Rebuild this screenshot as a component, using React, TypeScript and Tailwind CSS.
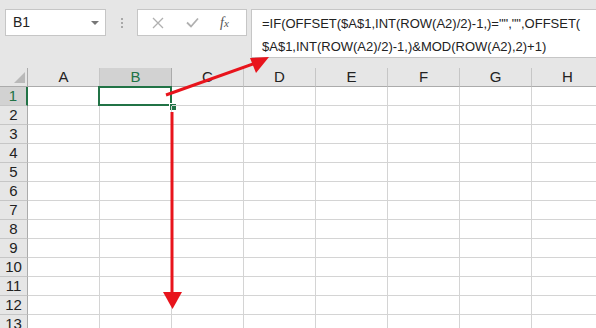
import React from "react";

const cols = ["A", "B", "C", "D", "E", "F", "G", "H"];
const rows = Array.from({ length: 13 }, (_, i) => i + 1);

export default function App() {
  return (
    <div
      className="relative w-[596px] h-[328px] overflow-hidden bg-white"
      style={{ fontFamily: '"Liberation Sans", Arial, sans-serif' }}
    >
      {/* toolbar */}
      <div className="h-[68px] bg-[#e6e6e6] flex items-start pt-[9px]">
        <div className="shrink-0 ml-[5px] w-[101px] h-[27px] bg-white border border-[#c6c6c6] flex items-center justify-between pl-[7px] pr-[6px] text-[14px] text-[#222]">
          <span>B1</span>
          <span className="w-0 h-0 border-l-[4px] border-r-[4px] border-t-[4px] border-l-transparent border-r-transparent border-t-[#777]" />
        </div>
        <div className="shrink-0 ml-[15px] mt-[9px] flex flex-col gap-[2px]">
          <span className="block w-[2px] h-[2px] bg-[#a8a8a8]" />
          <span className="block w-[2px] h-[2px] bg-[#a8a8a8]" />
          <span className="block w-[2px] h-[2px] bg-[#a8a8a8]" />
        </div>
        <div className="shrink-0 ml-[14px] w-[110px] h-[27px] bg-white border border-[#c6c6c6] flex items-center">
          <svg className="ml-[14px]" width="12" height="12" viewBox="0 0 12 12">
            <path d="M1 1 L11 11 M11 1 L1 11" stroke="#b0b0b0" strokeWidth="1.3" fill="none" />
          </svg>
          <svg className="ml-[22px]" width="13" height="11" viewBox="0 0 13 11">
            <path d="M1 5.5 L5 9.5 L12 1.5" stroke="#b0b0b0" strokeWidth="1.8" fill="none" />
          </svg>
          <span
            className="ml-[21px] text-[14px] italic text-[#555]"
            style={{ fontFamily: '"Liberation Serif", serif' }}
          >
            f<span className="text-[11px]">x</span>
          </span>
        </div>
        <div className="ml-[4px] min-w-0 flex-1 h-[49px] bg-white border border-[#c6c6c6] border-r-0 pl-[10px] pt-[2px] text-[13px] leading-[23px] text-[#222] whitespace-nowrap overflow-hidden">
          <div>=IF(OFFSET($A$1,INT(ROW(A2)/2)-1,)="","",OFFSET(</div>
          <div>$A$1,INT(ROW(A2)/2)-1,)&amp;MOD(ROW(A2),2)+1)</div>
        </div>
      </div>

      {/* grid */}
      <div className="grid grid-cols-[28px_repeat(8,72px)] auto-rows-[19px]">
        {/* header row */}
        <div className="relative bg-[#e6e6e6] border-r border-b border-[#ababab]">
          <svg className="absolute right-[2px] bottom-[3px]" width="11" height="11" viewBox="0 0 11 11">
            <path d="M11 0 L11 11 L0 11 Z" fill="#b9b9b9" />
          </svg>
        </div>
        {cols.map((c) => (
          <div
            key={c}
            className={
              c === "B"
                ? "bg-[#d2d2d2] border-r border-b border-r-[#ababab] border-b-[#217346] flex items-center justify-center text-[15px] text-[#217346]"
                : "bg-[#e6e6e6] border-r border-b border-r-[#c6c6c6] border-b-[#ababab] flex items-center justify-center text-[15px] text-[#222]"
            }
          >
            {c}
          </div>
        ))}
        {rows.map((r) => (
          <React.Fragment key={r}>
            <div
              className={
                r === 1
                  ? "bg-[#d2d2d2] border-r-2 border-b border-r-[#217346] border-b-[#c6c6c6] flex items-center justify-center text-[15px] text-[#217346]"
                  : "bg-[#e6e6e6] border-r border-b border-r-[#ababab] border-b-[#c6c6c6] flex items-center justify-center text-[15px] text-[#222]"
              }
            >
              {r}
            </div>
            {cols.map((c) => (
              <div key={c} className="relative border-r border-b border-[#d4d4d4]">
                {r === 1 && c === "B" && (
                  <>
                    <div className="absolute left-[-2px] top-[-1px] w-[74px] h-[20px] border-2 border-[#217346]" />
                    <div className="absolute left-[69px] top-[16px] w-[6px] h-[6px] bg-[#217346] border border-white box-content" />
                  </>
                )}
              </div>
            ))}
          </React.Fragment>
        ))}
      </div>

      {/* arrows overlay */}
      <svg className="absolute left-0 top-0 pointer-events-none" width="596" height="328" viewBox="0 0 596 328">
        <line x1="166" y1="95" x2="256" y2="63" stroke="#e8141c" strokeWidth="3" />
        <path d="M269 57 L250 58 L256 73 Z" fill="#e8141c" />
        <line x1="172" y1="112" x2="172" y2="294" stroke="#e8141c" strokeWidth="3" />
        <path d="M163 292 L182 292 L172.5 309 Z" fill="#e8141c" />
      </svg>
    </div>
  );
}
